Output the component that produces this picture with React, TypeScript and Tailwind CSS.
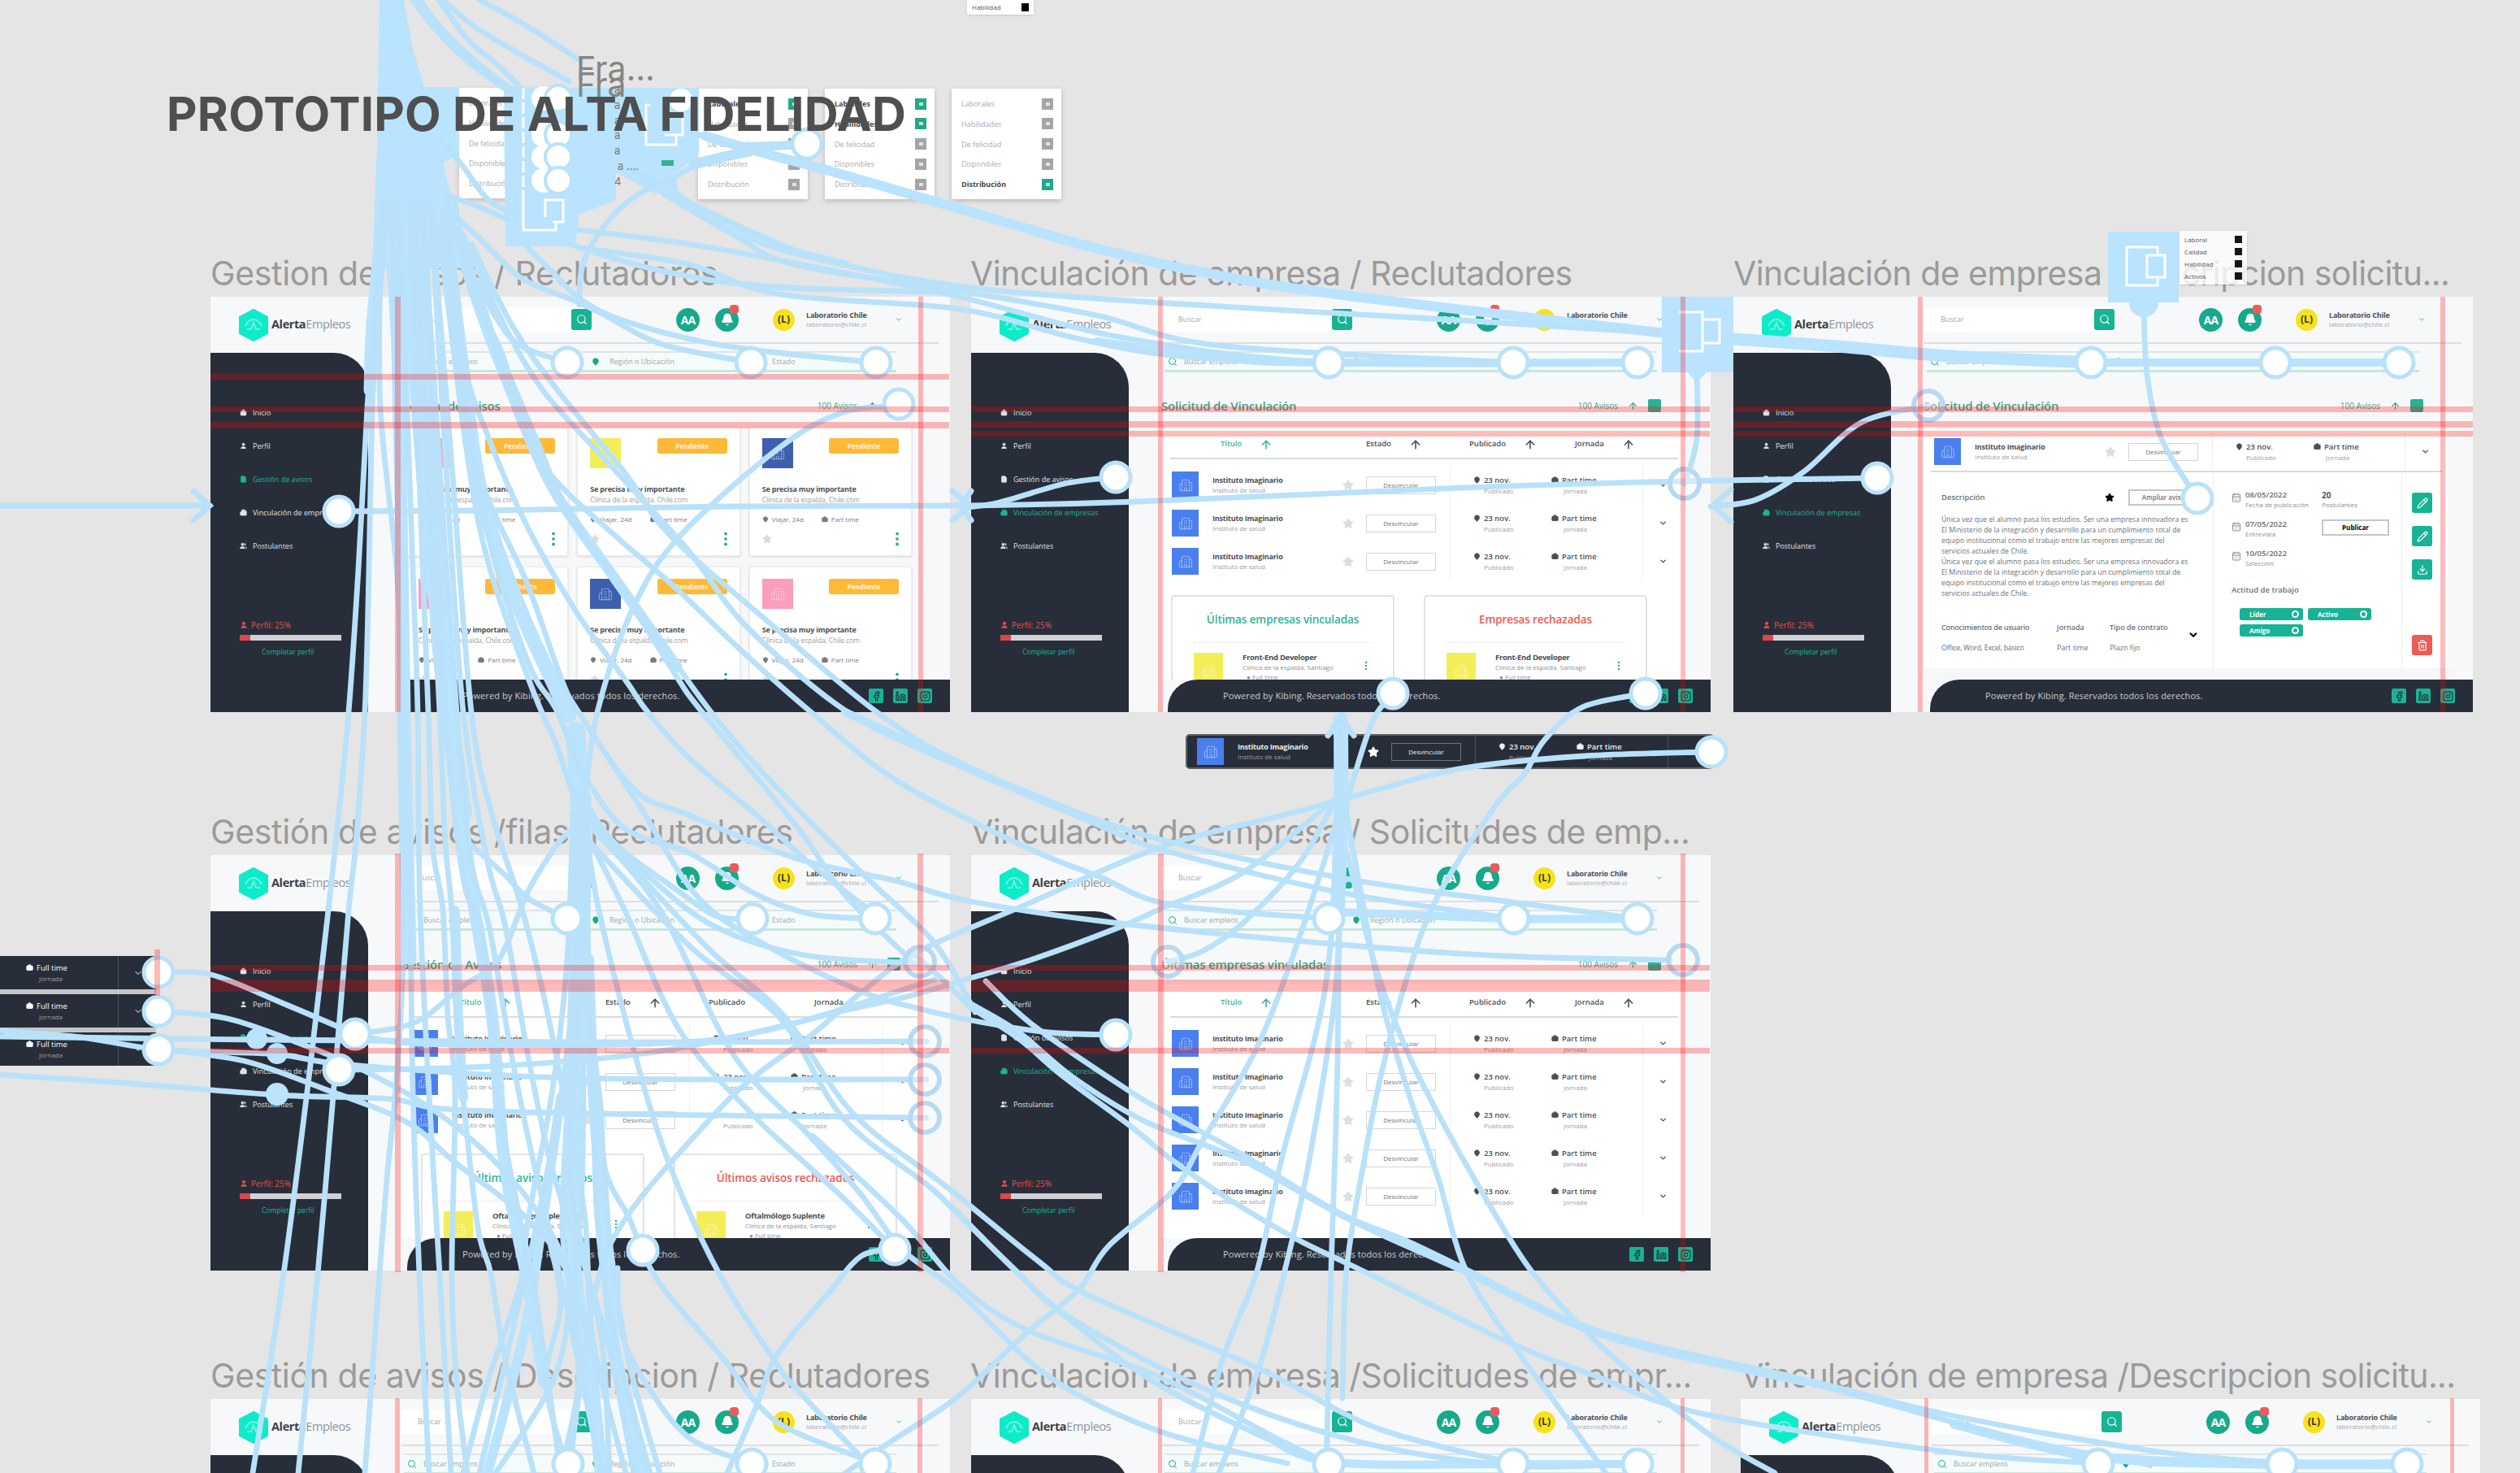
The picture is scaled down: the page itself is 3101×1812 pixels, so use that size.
import React from "react";
import { Search, MapPin, ArrowUp, ChevronDown, Star, Bell, Pencil, Download, Trash2, CalendarDays, MoreVertical, Users, House, User, FileText, Building2, Facebook, Linkedin, Instagram, Briefcase } from "lucide-react";

type Pt = [number, number];

/* ---------- shared pieces of a screen ---------- */

const NAV = [
  { icon: House, label: "Inicio" },
  { icon: User, label: "Perfil" },
  { icon: FileText, label: "Gestión de avisos" },
  { icon: Building2, label: "Vinculación de empresas" },
  { icon: Users, label: "Postulantes" },
];

function Brand() {
  return (
    <div className="flex h-[69px] items-center pl-[34px]">
      <svg className="h-[40px] w-[38px] shrink-0" viewBox="0 0 38 40">
        <path d="M19 1 36 10v20L19 39 2 30V10Z" fill="#0eebcb" stroke="#0eebcb" strokeWidth="2" strokeLinejoin="round" />
        <path d="M9 21c3-7 7-8 10-8s7 2 10 8M11 25h5l3-8 3 8h5" fill="none" stroke="#6df5e0" strokeWidth="2" />
      </svg>
      <div className="ml-[3px] whitespace-nowrap text-[14.5px] leading-none tracking-[-0.4px] text-[#3a4049]">
        <b>Alerta</b>
        <span className="text-[#8b929b]">Empleos</span>
      </div>
    </div>
  );
}

function Sidebar({ active }: { active: number }) {
  return (
    <div className="flex w-[194px] shrink-0 flex-col">
      <Brand />
      <div className="flex flex-1 flex-col rounded-tr-[42px] bg-[#282e39] pl-[36px] pt-[53px]">
        {NAV.map((n, i) => (
          <div key={n.label} className={"flex h-[41px] items-center gap-[7px] whitespace-nowrap text-[9px] " + (i === active ? "text-[#1bb394]" : "text-[#dfe3e8]")}>
            <n.icon className="h-[9px] w-[9px] fill-current" />
            {n.label}
          </div>
        ))}
        <div className="mt-[70px] flex items-center gap-1 text-[10px] leading-[14px] text-[#e05252]">
          <User className="h-[10px] w-[10px] fill-current" />
          Perfil: 25%
        </div>
        <div className="mt-[5px] flex h-[7px] w-[125px] bg-[#cfd1d4]">
          <div className="w-[13px] bg-[#d9484b]" />
        </div>
        <div className="mt-[8px] pl-[27px] text-[8.5px] leading-[11px] text-[#1bb394]">Completar perfil</div>
      </div>
    </div>
  );
}

function TopBar() {
  return (
    <div className="mr-[14px] ml-[41px] flex h-[58px] shrink-0 items-center border-b-2 border-[#dcdfe1]">
      <div className="flex h-[30px] w-[234px] items-center justify-between bg-white pl-[20px] text-[9px] text-[#a9a9a9]">
        Buscar
        <span className="flex h-[26px] w-[25px] items-center justify-center rounded-[3px] bg-[#17b394]">
          <Search className="h-[14px] w-[14px] text-white" />
        </span>
      </div>
      <span className="ml-[104px] flex h-[29px] w-[29px] items-center justify-center rounded-full bg-[#17a98c] text-[14px] font-bold tracking-[-1px] text-white">AA</span>
      <span className="relative ml-[19px] flex h-[29px] w-[29px] items-center justify-center rounded-full bg-[#17a98c]">
        <Bell className="h-[16px] w-[16px] fill-white text-white" />
        <span className="absolute -top-[4px] right-0 h-[11px] w-[11px] rounded-[4px] bg-[#ee5a5a]" />
      </span>
      <span className="ml-[42px] flex h-[27px] w-[27px] items-center justify-center rounded-full bg-[#f8e21c] text-[12px] font-bold text-[#3b3a20]">(L)</span>
      <div className="ml-[14px] w-[96px] whitespace-nowrap leading-[11px]">
        <div className="text-[9px] font-bold tracking-[-0.2px] text-[#4b4f56]">Laboratorio Chile</div>
        <div className="text-[8px] text-[#a3a7ad]">laboratorio@chile.cl</div>
      </div>
      <ChevronDown className="ml-[13px] h-[10px] w-[10px] text-[#17a98c]" />
    </div>
  );
}

function FilterBar() {
  return (
    <div className="mt-[9px] mr-[66px] ml-[44px] flex h-[26px] shrink-0 items-center border-t-2 border-b-[3px] border-t-[#dfe5e6] border-b-[#c8e6dc] bg-[#f4fbfa] text-[9px] text-[#a4a8ac]">
      <span className="flex w-[231px] items-center gap-2 pl-[4px]">
        <Search className="h-[12px] w-[12px] text-[#17a98c]" />
        Buscar empleos
      </span>
      <span className="flex w-[222px] items-center gap-3">
        <MapPin className="h-[12px] w-[10px] fill-[#17a98c] text-[#17a98c]" />
        Región o Ubicación
      </span>
      Estado
    </div>
  );
}

function Heading({ title }: { title: string }) {
  return (
    <div className="mr-[34px] ml-[40px] flex h-[66px] shrink-0 items-center pt-[16px]">
      <div className="flex-1 whitespace-nowrap text-[15px] leading-[20px] font-semibold tracking-[-0.2px] text-[#35a98c]">{title}</div>
      <div className="text-[10px] text-[#45a890]">100 Avisos</div>
      <ArrowUp className="mx-3 h-[13px] w-[13px] text-[#2aa286]" />
      <span className="mr-[27px] h-[16px] w-[16px] rounded-[2px] bg-[#27b294]" />
    </div>
  );
}

function Footer({ round }: { round: boolean }) {
  return (
    <div className={"ml-[48px] flex h-[40px] shrink-0 items-center bg-[#282e39] pr-[22px] pl-[68px] " + (round ? "rounded-tl-[36px]" : "")}>
      <span className="flex-1 whitespace-nowrap text-[11px] tracking-[0.1px] text-[#c9cdd2]">Powered by Kibing. Reservados todos los derechos.</span>
      <span className="flex gap-[12px] text-[#17b394]">
        {[Facebook, Linkedin, Instagram].map((I, i) => (
          <span key={i} className="flex h-[18px] w-[18px] items-center justify-center rounded-[2px] bg-[#17b394]">
            <I className="h-[13px] w-[13px] text-[#282e39]" />
          </span>
        ))}
      </span>
    </div>
  );
}

/* ---------- panel contents ---------- */

function Avatar({ tone, size }: { tone: string; size: string }) {
  return (
    <span className={"flex shrink-0 items-center justify-center " + tone + " " + size}>
      <Building2 className="h-[18px] w-[18px] text-white/40" strokeWidth={1.5} />
    </span>
  );
}

const BLUE = "bg-[#4a7fee]";
const NAVY = "bg-[#3d5fae]";
const PINK = "bg-[#fb9dbd]";
const YELLOW = "bg-[#f3ee58]";

function JobCard({ tone }: { tone: string }) {
  return (
    <div className="flex h-[160px] flex-col border border-[#ececee] bg-white px-[15px] pt-[14px] shadow-[0_1px_3px_#00000022]">
      <div className="flex items-start justify-between">
        <Avatar tone={tone} size="h-[37px] w-[38px]" />
        <span className="flex h-[19px] w-[86px] items-center justify-center rounded-[3px] bg-[#ffb938] text-[8px] font-bold text-[#fff1d4]">Pendiente</span>
      </div>
      <div className="mt-[20px] whitespace-nowrap text-[9px] leading-[12px] font-bold tracking-[-0.2px] text-[#4c5056]">Se precisa muy importante</div>
      <div className="whitespace-nowrap text-[8.5px] leading-[13px] tracking-[-0.1px] text-[#9b9fa4]">Clínica de la espalda, Chile.com</div>
      <div className="mt-[12px] flex gap-[22px] text-[8px] leading-[12px] text-[#777b80]">
        <span className="flex items-center gap-1"><MapPin className="h-[8px] w-[8px] fill-current" />Viajar, 24d</span>
        <span className="flex items-center gap-1"><Briefcase className="h-[8px] w-[8px] fill-current" />Part time</span>
      </div>
      <div className="mt-[7px] flex items-center justify-between">
        <Star className="h-[12px] w-[12px] fill-[#d9dbde] text-[#d9dbde]" />
        <MoreVertical className="-mr-[9px] h-[22px] w-[22px] fill-[#17a98c] text-[#17a98c]" />
      </div>
    </div>
  );
}

function CardGrid() {
  return (
    <div className="mr-[47px] ml-[46px] grid grid-cols-3 gap-x-[11px] gap-y-[13px]">
      {[PINK, YELLOW, NAVY, PINK, NAVY, PINK].map((t, i) => (
        <JobCard key={i} tone={t} />
      ))}
    </div>
  );
}

function CompanyRow({ dark }: { dark?: boolean }) {
  const strong = dark ? "text-[#eceff2]" : "text-[#4a4f56]";
  return (
    <div className={"flex h-[47px] items-center whitespace-nowrap pl-[12px] " + strong}>
      <Avatar tone={BLUE} size="h-[33px] w-[33px]" />
      <div className="ml-[17px] w-[160px] leading-[12px]">
        <div className="text-[9px] font-bold tracking-[-0.2px]">Instituto Imaginario</div>
        <div className="text-[8px] text-[#9a9ea4]">Instituto de salud</div>
      </div>
      <Star className={"h-[14px] w-[14px] " + (dark ? "fill-white text-white" : "fill-[#dcdee0] text-[#dcdee0]")} />
      <span className={"ml-[15px] flex h-[22px] w-[86px] items-center justify-center border text-[8px] " + (dark ? "border-[#6b727c]" : "border-[#d3d5d8] bg-white text-[#70757b]")}>Desvincular</span>
      <div className={"ml-[17px] flex h-full w-[125px] items-center border-l pl-[28px] " + (dark ? "border-[#4a515c]" : "border-[#eef0f1]")}>
        <div className="leading-[13px]">
          <div className="flex items-center gap-1 text-[9.5px] font-semibold"><MapPin className="h-[9px] w-[9px] fill-current" />23 nov.</div>
          <div className="pl-[13px] text-[8px] text-[#9a9ea4]">Publicado</div>
        </div>
      </div>
      <div className="flex h-full w-[112px] items-center leading-[13px]">
        <div>
          <div className="flex items-center gap-1 text-[9.5px] font-semibold"><Briefcase className="h-[9px] w-[9px] fill-current" />Part time</div>
          <div className="pl-[15px] text-[8px] text-[#9a9ea4]">Jornada</div>
        </div>
      </div>
      <span className={"flex h-full items-center border-l pl-[19px] " + (dark ? "border-[#4a515c]" : "border-[#eef0f1]")}>
        <ChevronDown className="h-[11px] w-[11px]" strokeWidth={3} />
      </span>
    </div>
  );
}

function TableHead() {
  const cols: [string, string][] = [
    ["Título", "w-[179px] text-[#35b79a]"],
    ["Estado", "w-[127px]"],
    ["Publicado", "w-[130px]"],
    ["Jornada", "w-[90px]"],
  ];
  return (
    <div className="mr-[10px] ml-[10px] flex h-[41px] items-center border-b-2 border-[#d7dbdc] pt-[6px] pl-[62px] text-[9.5px] font-semibold text-[#4a4f56]">
      {cols.map(([c, cls]) => (
        <span key={c} className={"flex items-center gap-[22px] " + cls}>
          {c}
          <ArrowUp className="h-[18px] w-[16px]" strokeWidth={2.4} />
        </span>
      ))}
    </div>
  );
}

function SummaryCard({ title, tone, job }: { title: string; tone: string; job: string }) {
  return (
    <div className="flex w-[275px] flex-col rounded-[4px] border-2 border-[#e1e4e6] bg-white px-[26px] pt-[18px]">
      <div className={"text-center text-[13.5px] leading-[20px] font-semibold tracking-[-0.1px] whitespace-nowrap " + tone}>{title}</div>
      <div className="mt-[18px] border-t border-dashed border-[#e3e5e7]" />
      <div className="mt-[12px] flex">
        <Avatar tone={YELLOW} size="h-[46px] w-[36px]" />
        <div className="ml-[24px] flex-1 whitespace-nowrap leading-[12px]">
          <div className="text-[9.5px] font-bold tracking-[-0.3px] text-[#4a4f56]">{job}</div>
          <div className="text-[8px] text-[#8d9197]">Clínica de la espalda, Santiago</div>
          <div className="pl-[5px] text-[8px] text-[#8d9197]">● Full time</div>
        </div>
        <MoreVertical className="mt-[6px] h-[20px] w-[14px] text-[#17a98c]" />
      </div>
    </div>
  );
}

function TablePanel({ rows, cards, inset = "pl-[11px]" }: { rows: number; cards?: [string, string, string]; inset?: string }) {
  return (
    <div className="mr-[30px] ml-[41px] flex flex-1 flex-col bg-white">
      <TableHead />
      <div className="pt-[8px]">
        {Array.from({ length: rows }, (_, i) => (
          <CompanyRow key={i} />
        ))}
      </div>
      {cards && (
        <div className={"mt-[18px] flex h-[200px] gap-[36px] " + inset}>
          <SummaryCard title={cards[0]} tone="text-[#2fb598]" job={cards[2]} />
          <SummaryCard title={cards[1]} tone="text-[#f05a52]" job={cards[2]} />
        </div>
      )}
    </div>
  );
}

const PARAGRAPH = [
  "Única vez que el alumno pasa los estudios. Ser una empresa innovadora es",
  "El Ministerio de la integración y desarrollo para un cumplimiento total de",
  "equipo institucional como el trabajo entre las mejores empresas del",
  "servicios actuales de Chile.",
];

function DateItem({ date, note }: { date: string; note: string }) {
  return (
    <div className="flex h-[36px] gap-[5px] whitespace-nowrap">
      <CalendarDays className="mt-[3px] h-[12px] w-[12px] text-[#888d93]" />
      <div className="leading-[12px]">
        <div className="text-[9.5px] font-semibold text-[#666b71]">{date}</div>
        <div className="text-[8px] text-[#8d9197]">{note}</div>
      </div>
    </div>
  );
}

function Tag({ label }: { label: string }) {
  return (
    <span className="flex h-[15px] w-[78px] items-center justify-between rounded-[3px] bg-[#17b394] pr-[5px] pl-[12px] text-[8px] font-bold text-white">
      {label}
      <i className="h-[9px] w-[9px] rounded-full border-2 border-white" />
    </span>
  );
}

function DetailPanel() {
  return (
    <div className="mr-[30px] ml-[41px] flex flex-1 flex-col bg-white">
      <div className="mx-[8px] border-b-2 border-[#d7dbdc] pt-[8px]">
        <div className="-ml-[8px]"><CompanyRow /></div>
      </div>
      <div className="flex flex-1 pl-[21px]">
        <div className="w-[334px] pt-[20px] text-[#6d7177]">
          <div className="flex h-[22px] items-center text-[9.5px] font-semibold">
            <span className="flex-1">Descripción</span>
            <Star className="mr-[17px] h-[12px] w-[12px] fill-black text-black" />
            <span className="mr-[18px] flex h-[20px] w-[86px] items-center justify-center border-2 border-[#c3c6c9] text-[8px]">Ampliar aviso</span>
          </div>
          <div className="mt-[10px] w-[320px] text-[8.7px] leading-[13px] whitespace-nowrap">
            {[0, 1].map((k) => (
              <p key={k}>
                {PARAGRAPH.map((l) => (
                  <span key={l} className="block">{l}</span>
                ))}
              </p>
            ))}
          </div>
          <div className="mt-[27px] grid grid-cols-[142px_65px_90px_auto] items-center gap-y-[12px] whitespace-nowrap text-[9px] leading-[13px]">
            <span className="font-semibold tracking-[-0.2px]">Conocimientos de usuario</span>
            <span className="font-semibold">Jornada</span>
            <span className="font-semibold">Tipo de contrato</span>
            <ChevronDown className="ml-[6px] h-[14px] w-[14px] translate-y-[10px] text-black" strokeWidth={3.5} />
            <span className="tracking-[-0.3px]">Office, Word, Excel, básico</span>
            <span>Part time</span>
            <span>Plazo fijo</span>
          </div>
        </div>
        <div className="w-[232px] border-l border-[#eceef0] pt-[22px] pl-[22px]">
          <div className="grid grid-cols-[111px_auto]">
            <DateItem date="08/05/2022" note="Fecha de publicación" />
            <div className="text-[8px] leading-[12px] text-[#8d9197]"><b className="block text-[10px] text-[#555a60]">20</b>Postulantes</div>
            <DateItem date="07/05/2022" note="Entrevista" />
            <span className="flex h-[20px] w-[83px] items-center justify-center border-2 border-[#c3c6c9] text-[8px] font-bold">Publicar</span>
            <DateItem date="10/05/2022" note="Selección" />
          </div>
          <div className="mt-[8px] text-[9.5px] font-semibold text-[#6d7177]">Actitud de trabajo</div>
          <div className="mt-[15px] flex flex-wrap gap-x-[6px] gap-y-[5px] pl-[10px]">
            <Tag label="Líder" />
            <Tag label="Activo" />
            <Tag label="Amigo" />
          </div>
        </div>
        <div className="flex flex-1 flex-col items-center gap-[16px] border-l border-[#eceef0] pt-[25px] pr-[8px]">
          {[Pencil, Pencil, Download].map((I, i) => (
            <span key={i} className="flex h-[25px] w-[25px] items-center justify-center rounded-[3px] bg-[#17b394]">
              <I className="h-[14px] w-[14px] text-white" />
            </span>
          ))}
          <span className="mt-[52px] flex h-[25px] w-[25px] items-center justify-center rounded-[3px] bg-[#ee5a55]">
            <Trash2 className="h-[14px] w-[14px] text-white" />
          </span>
        </div>
      </div>
      <div className="-mx-2 h-[14px] bg-[#f6f7f9]" />
    </div>
  );
}

type FrameProps = { at: string; active: number; title: string; round?: boolean; children: React.ReactNode };

function Frame({ at, active, title, round = true, children }: FrameProps) {
  return (
    <section className={"absolute flex h-[511px] w-[910px] overflow-hidden bg-[#f7f8fa] " + at}>
      <Sidebar active={active} />
      <div className="flex min-w-0 flex-1 flex-col">
        <TopBar />
        <FilterBar />
        <Heading title={title} />
        <div className="flex min-h-0 flex-1 flex-col overflow-hidden">{children}</div>
        <Footer round={round} />
      </div>
    </section>
  );
}

function Label({ at, children }: { at: string; children: React.ReactNode }) {
  return <div className={"absolute whitespace-nowrap text-[41px] leading-[50px] text-[#9b9b9b] " + at}>{children}</div>;
}

function OptionMenu({ at, on }: { at: string; on: number[] }) {
  return (
    <div className={"absolute flex h-[136px] w-[135px] flex-col justify-between bg-white py-[11px] pr-[10px] pl-[12px] shadow-[0_2px_6px_#00000033] " + at}>
      {["Laborales", "Habilidades", "De felicidad", "Disponibles", "Distribución"].map((t, i) => (
        <div key={t} className={"flex items-center justify-between text-[9px] leading-[15px] " + (on.includes(i) ? "font-bold text-[#45484c]" : "text-[#a9abae]")}>
          {t}
          <span className={"flex h-[14px] w-[14px] items-center justify-center " + (on.includes(i) ? "bg-[#22a888]" : "bg-[#a3a5a6]")}>
            <i className="h-[4px] w-[5px] bg-white/70" />
          </span>
        </div>
      ))}
    </div>
  );
}

/* ---------- prototype connectors ---------- */

function smooth(p: Pt[]): string {
  let d = `M${p[0][0]} ${p[0][1]}`;
  for (let i = 0; i < p.length - 1; i++) {
    const a = p[Math.max(0, i - 1)], b = p[i], c = p[i + 1], e = p[Math.min(p.length - 1, i + 2)];
    d += `C${b[0] + (c[0] - a[0]) / 6} ${b[1] + (c[1] - a[1]) / 6} ${c[0] - (e[0] - b[0]) / 6} ${c[1] - (e[1] - b[1]) / 6} ${c[0]} ${c[1]}`;
  }
  return d;
}

const THIN: Pt[][] = [
  // fan above the menus
  [[508, 0], [535, 35], [575, 75], [625, 112]],
  [[517, 0], [543, 35], [585, 75], [632, 112]],
  [[540, 0], [577, 50], [610, 78], [643, 110]],
  [[545, 0], [580, 30], [625, 58], [700, 100]],
  [[590, 0], [650, 33], [715, 75]],
  // trunk going down the left
  [[470, 250], [458, 440], [452, 500], [441, 700], [429, 876], [413, 1037], [404, 1120], [382, 1310], [349, 1567], [311, 1812]],
  [[476, 250], [462, 440], [458, 500], [454, 700], [449, 876], [438, 1037], [429, 1120], [409, 1360], [391, 1567], [367, 1812]],
  [[483, 250], [486, 480], [491, 700], [492, 876], [494, 1000], [496, 1180], [487, 1340], [477, 1440], [467, 1567], [449, 1812]],
  [[468, 300], [468, 500], [488, 700], [497, 876], [503, 1037], [505, 1120], [508, 1340], [516, 1567], [528, 1812]],
  [[490, 250], [500, 480], [508, 700], [514, 876], [517, 1120], [531, 1400], [541, 1567], [555, 1812]],
  [[505, 250], [515, 560], [527, 876], [532, 1037], [545, 1120], [551, 1250], [560, 1343], [556, 1567], [562, 1700], [575, 1812]],
  [[510, 250], [525, 560], [541, 876], [548, 1037], [556, 1120], [562, 1250], [570, 1350], [588, 1510], [604, 1567], [621, 1669], [657, 1812]],
  [[520, 250], [534, 560], [548, 876], [570, 1080], [592, 1140], [604, 1260], [617, 1380], [640, 1500], [660, 1600], [690, 1812]],
  [[520, 250], [540, 560], [562, 876], [580, 1060], [602, 1140], [628, 1290], [650, 1400], [680, 1530], [700, 1620], [740, 1812]],
  [[530, 250], [548, 560], [570, 876], [600, 1060], [622, 1140], [650, 1300], [680, 1440], [720, 1560], [750, 1660], [780, 1812]],
  [[530, 250], [555, 560], [580, 876], [605, 1000], [640, 1110], [668, 1220], [700, 1380], [720, 1500], [730, 1650], [770, 1812]],
  [[540, 280], [575, 560], [603, 700], [656, 850], [686, 920], [715, 1010]],
  [[545, 260], [565, 440], [601, 659], [650, 815], [686, 876], [718, 960]],
  [[550, 280], [579, 547], [650, 721], [690, 833], [712, 876], [780, 971], [846, 1002], [980, 1056], [1100, 1083], [1195, 1109], [1379, 1136], [1650, 1162], [1850, 1176], [2055, 1181]],
  [[550, 250], [570, 440], [601, 538], [650, 650], [712, 757], [770, 837], [797, 876], [846, 931], [936, 1007], [994, 1060], [1070, 1120]],
  [[560, 280], [600, 400], [640, 520], [686, 614], [757, 712], [833, 833], [864, 876], [980, 1016], [1039, 1100], [1120, 1180]],
  [[570, 300], [610, 420], [660, 540], [700, 630], [784, 748], [875, 876], [958, 971], [1070, 1083], [1150, 1160], [1200, 1245]],
  // long sweeps towards the second column
  [[560, 250], [577, 350], [617, 433], [640, 510], [677, 583], [757, 659], [829, 721], [913, 801], [998, 876], [1106, 962], [1262, 1042], [1352, 1078], [1441, 1113], [1635, 1130]],
  [[570, 290], [617, 393], [668, 480], [748, 569], [846, 676], [918, 770], [1043, 876], [1173, 939], [1352, 1015], [1432, 1046], [1650, 1098], [1863, 1130]],
  [[580, 300], [630, 400], [686, 480], [770, 583], [824, 658], [936, 757], [1079, 876], [1185, 940], [1360, 1012], [1500, 1050], [1680, 1085], [1863, 1110], [2015, 1130]],
  // first frame filters
  [[565, 270], [597, 300], [643, 343], [707, 370], [743, 387], [813, 423], [924, 446]],
  [[640, 295], [680, 335], [713, 367], [763, 393], [863, 420], [950, 433], [1078, 446]],
  [[590, 350], [610, 390], [640, 425], [698, 446]],
  [[540, 170], [570, 205], [600, 245], [635, 265]],
  [[550, 240], [590, 255], [625, 270]],
  [[807, 227], [770, 250], [737, 287], [716, 330], [713, 375]],
  // top band to the overlay box
  [[816, 233], [920, 283], [1016, 320], [1180, 352], [1420, 372], [1780, 393], [2050, 410]],
  [[816, 238], [905, 290], [979, 326], [1180, 358], [1350, 388], [1500, 425], [1862, 446]],
  [[713, 283], [846, 300], [1000, 328], [1180, 365], [1380, 415], [1635, 446], [2015, 446]],
  [[713, 305], [846, 325], [960, 362], [1180, 380], [1320, 415], [1450, 438], [1635, 446]],
  [[700, 300], [800, 330], [940, 352], [1180, 360]],
  [[850, 200], [915, 185], [985, 180]],
  [[858, 165], [900, 178], [985, 176]],
  [[780, 210], [816, 225], [855, 205], [940, 185]],
  // card grid
  [[1106, 500], [1038, 507], [960, 550], [837, 659], [779, 748], [735, 876], [715, 1000], [686, 1038], [650, 1096], [614, 1180], [568, 1214], [510, 1258], [437, 1272]],
  // horizontals
  [[0, 622], [258, 622]],
  [[417, 629], [600, 628], [900, 623], [1190, 622], [1400, 617], [1800, 600], [2073, 592], [2310, 588]],
  [[1373, 587], [1310, 595], [1230, 618], [1190, 624]],
  [[2105, 623], [2160, 615], [2220, 580], [2290, 520], [2373, 499]],
  [[0, 1275], [316, 1279], [700, 1282], [1140, 1281]],
  [[0, 1268], [100, 1276], [197, 1291], [341, 1297], [430, 1310], [700, 1326], [1140, 1328]],
  [[0, 1322], [150, 1332], [341, 1347], [480, 1352], [600, 1367], [1140, 1375]],
  [[197, 1196], [260, 1199], [350, 1235], [437, 1272]],
  [[197, 1244], [280, 1253], [370, 1284], [450, 1318], [540, 1370], [620, 1440], [680, 1520], [710, 1600]],
  [[197, 1291], [300, 1305], [400, 1340], [500, 1380], [560, 1430], [650, 1500], [700, 1570], [740, 1700]],
  [[417, 1316], [600, 1312], [800, 1295], [950, 1265], [1039, 1243], [1120, 1225], [1195, 1203], [1271, 1180], [1379, 1140], [1428, 1118], [1530, 1073], [1640, 985]],
  [[437, 1272], [520, 1284], [800, 1284], [950, 1266], [1150, 1205]],
  // second column, second row
  [[2106, 925], [1950, 930], [1800, 945], [1700, 970], [1590, 1000], [1428, 1042], [1262, 1113], [1129, 1171], [1061, 1220], [1000, 1272], [934, 1320], [880, 1370], [769, 1500], [730, 1600], [700, 1812]],
  [[2025, 853], [1947, 870], [1900, 911], [1876, 952], [1841, 990], [1768, 1105], [1731, 1204], [1700, 1320], [1680, 1420], [1657, 1563], [1652, 1720]],
  [[1714, 853], [1690, 885], [1668, 950], [1655, 1000]],
  [[1437, 1183], [1480, 1170], [1530, 1135], [1600, 1060], [1645, 980]],
  [[1650, 990], [1630, 1220], [1578, 1422], [1547, 1563], [1505, 1670], [1468, 1812]],
  [[1648, 990], [1645, 1200], [1612, 1422], [1581, 1563], [1550, 1680], [1500, 1812]],
  [[1650, 900], [1646, 1300], [1638, 1563], [1632, 1812]],
  [[1655, 990], [1675, 1100], [1700, 1230], [1735, 1350], [1770, 1450], [1804, 1563], [1866, 1660], [1915, 1727], [1976, 1812]],
  [[1658, 1050], [1690, 1180], [1730, 1290], [1775, 1380], [1820, 1460], [1884, 1563], [1964, 1650], [2037, 1713], [2111, 1770], [2184, 1812]],
  [[1648, 1000], [1600, 1150], [1547, 1288], [1480, 1403], [1443, 1465], [1364, 1533], [1327, 1587], [1266, 1637], [1180, 1717], [1097, 1773], [1040, 1812]],
  [[1213, 1207], [1271, 1261], [1388, 1341], [1441, 1372], [1530, 1421], [1650, 1493], [1730, 1526], [1817, 1568], [1964, 1640], [2221, 1700], [2405, 1750], [2582, 1800]],
  [[1195, 1235], [1254, 1270], [1320, 1325], [1410, 1380], [1530, 1428], [1660, 1500], [1792, 1560], [1930, 1625], [2037, 1656], [2221, 1697], [2405, 1742], [2650, 1785], [2808, 1800]],
  [[1195, 1240], [1254, 1278], [1307, 1323], [1392, 1386], [1441, 1426], [1512, 1475], [1597, 1525], [1670, 1560], [1854, 1650], [1964, 1693], [2099, 1740], [2405, 1787], [2582, 1800]],
  [[1120, 1170], [1160, 1205], [1195, 1240]],
  [[730, 904], [788, 993], [860, 1105], [950, 1167], [1061, 1220], [1120, 1238], [1200, 1256], [1290, 1270], [1373, 1273]],
  [[716, 980], [757, 1038], [829, 1092], [882, 1127], [926, 1130]],
  [[722, 960], [770, 1020], [850, 1050], [930, 1100], [1000, 1125], [1077, 1130]],
  [[728, 1010], [800, 1080], [880, 1140], [990, 1175], [1130, 1185]],
  [[730, 1040], [850, 1165], [961, 1254], [1039, 1377], [1151, 1466], [1236, 1550], [1300, 1610], [1420, 1700], [1560, 1770], [1635, 1800]],
  [[735, 1020], [870, 1165], [965, 1250], [1050, 1370], [1165, 1460], [1276, 1550], [1339, 1593], [1548, 1683], [1695, 1757], [1862, 1800]],
  [[722, 1030], [737, 1120], [778, 1285], [822, 1428], [885, 1567], [956, 1678], [975, 1703], [1060, 1793]],
  [[724, 1030], [769, 1120], [836, 1267], [925, 1370], [992, 1432], [1039, 1475], [1101, 1537]],
  [[730, 1020], [813, 1120], [903, 1298], [996, 1397], [1060, 1470], [1110, 1537], [1180, 1590], [1290, 1693], [1425, 1760], [1584, 1800]],
  [[1000, 1397], [1110, 1500], [1180, 1580], [1266, 1637], [1425, 1693], [1572, 1770], [1635, 1800]],
  [[1151, 1466], [1247, 1560], [1315, 1620], [1486, 1710], [1670, 1773], [1862, 1803], [2015, 1800]],
  // central cascade
  [[710, 980], [708, 1180], [690, 1350], [657, 1522], [630, 1640], [590, 1812]],
  [[705, 1000], [698, 1180], [680, 1340], [650, 1500], [640, 1580], [600, 1700], [570, 1812]],
  [[718, 980], [716, 1180], [706, 1340], [692, 1500], [700, 1600], [680, 1700], [610, 1812]],
  [[724, 980], [722, 1180], [730, 1340], [735, 1500], [755, 1640], [800, 1812]],
  [[722, 1000], [726, 1250], [742, 1420], [752, 1540], [775, 1680], [812, 1812]],
  [[715, 1180], [738, 1350], [745, 1440], [775, 1500], [791, 1544]],
  [[712, 1180], [700, 1420], [722, 1560], [742, 1660], [750, 1812]],
  [[700, 1300], [672, 1480], [690, 1600], [672, 1700], [700, 1812]],
  [[718, 1300], [716, 1460], [706, 1600], [712, 1700], [690, 1812]],
  [[791, 1544], [820, 1590], [889, 1670], [932, 1727], [975, 1760], [1077, 1800]],
  [[760, 1560], [765, 1640], [800, 1710], [850, 1770], [925, 1800]],
  [[1101, 1537], [1060, 1545], [1020, 1590], [956, 1667], [932, 1727], [895, 1812]],
  [[577, 1037], [620, 1075], [650, 1105], [698, 1130]],
  // description dialog
  [[2638, 375], [2642, 460], [2660, 540], [2704, 613]],
  [[2088, 455], [2088, 540], [2073, 595]],
];

const THICK: { w: number; p: Pt[] }[] = [
  { w: 22, p: [[516, 250], [522, 480], [532, 640], [545, 820], [570, 1000]] },
  { w: 15, p: [[535, 740], [548, 876], [572, 1037], [584, 1120], [606, 1254], [621, 1432], [650, 1580], [670, 1700]] },
  { w: 26, p: [[500, 280], [517, 480], [530, 650], [534, 720]] },
  { w: 15, p: [[470, 280], [458, 400], [455, 480]] },
  { w: 15, p: [[480, 280], [491, 480], [498, 876], [505, 1180]] },
  { w: 18, p: [[545, 260], [572, 480], [595, 620], [640, 750], [700, 880]] },
  { w: 13, p: [[555, 270], [590, 380], [628, 480], [680, 600], [757, 712], [833, 820]] },
  { w: 24, p: [[708, 900], [716, 1040], [712, 1180], [708, 1330], [700, 1480]] },
  { w: 14, p: [[724, 1180], [730, 1340], [742, 1500], [755, 1650], [790, 1812]] },
  { w: 12, p: [[690, 1350], [665, 1520], [645, 1640], [600, 1812]] },
  { w: 16, p: [[700, 1480], [712, 1600], [728, 1700], [740, 1812]] },
  { w: 12, p: [[560, 1120], [564, 1250], [570, 1350]] },
  { w: 18, p: [[1650, 885], [1650, 1000], [1646, 1120]] },
  { w: 10, p: [[1040, 876], [1190, 945], [1360, 1015]] },
  { w: 10, p: [[1800, 1562], [1930, 1625], [2037, 1660], [2221, 1700]] },
  { w: 12, p: [[868, 167], [935, 187], [1031, 213], [1216, 267], [1340, 303], [1480, 335], [1660, 364], [2050, 410]] },
  { w: 10, p: [[826, 235], [880, 270], [950, 302], [1040, 325]] },
  { w: 15, p: [[2133, 417], [2260, 426], [2400, 438], [2573, 446]] },
  { w: 10, p: [[1350, 420], [1500, 440], [1635, 446], [2015, 446]] },
  { w: 10, p: [[2573, 446], [2952, 446]] },
  { w: 10, p: [[1650, 1122], [1863, 1130], [2015, 1130]] },
  { w: 10, p: [[1550, 1760], [1635, 1798], [1862, 1801], [2015, 1801]] },
  { w: 12, p: [[2405, 1752], [2582, 1792], [2808, 1801], [2962, 1801]] },
];

const HOTSPOTS: Pt[] = [
  [698, 446], [924, 446], [1078, 446], [417, 629],
  [1635, 446], [1862, 446], [2015, 446], [1373, 587], [1714, 853], [2025, 853],
  [2573, 446], [2800, 446], [2952, 446], [2310, 588], [2704, 613],
  [698, 1130], [926, 1130], [1077, 1130], [1635, 1130], [1863, 1130], [2015, 1130], [1373, 1273],
  [437, 1272], [417, 1316], [195, 1196], [195, 1244], [195, 1291], [791, 1538], [1101, 1537], [2106, 925],
  [699, 1801], [925, 1801], [1077, 1801], [1635, 1801], [1862, 1801], [2015, 1801], [2582, 1801], [2808, 1801], [2962, 1801],
  [1106, 497], [993, 177],
];
const RINGS: Pt[] = [[1138, 1281], [1138, 1328], [1138, 1375], [1132, 1183], [1437, 1183], [2071, 1181], [2373, 499], [2073, 595]];

function Connectors() {
  return (
    <svg className="absolute inset-0 h-[1812px] w-[3101px]" viewBox="0 0 3101 1812" fill="none" stroke="#b9e1fa" strokeLinecap="round">
      <path stroke="none" fill="#b9e3ff" d="M467 0H497L508 60 522 107H565V190L545 200 555 240 572 290 580 330H458L464 180Z" />
      <path stroke="none" fill="#b9e3ff" d="M620 108H860V190L832 212 834 238 806 238 758 212V246L712 264 708 303H622Z" />
      {THICK.map((l, i) => <path key={i} stroke="#b9e3ff" strokeWidth={l.w} d={smooth(l.p)} />)}
      {THIN.map((p, i) => <path key={i} strokeWidth={6.8} d={smooth(p)} />)}
      <path strokeWidth={7} d="M238 604 258 622 238 640M1172 604 1194 622 1172 640M2130 602 2108 622 2130 642M1634 905 1650 882 1666 905M1195 604 1182 622 1195 640" />
      <g stroke="none" fill="#b9e3ff">
        <path d="M2045 365H2133V458H2100L2088 470 2076 458H2045Z" />
        <path d="M2594 285H2681V372H2656A18 18 0 0 1 2620 372H2594Z" />
        <circle cx="316" cy="1278" r="13" />
        <circle cx="341" cy="1296" r="13" />
        <circle cx="341" cy="1346" r="14" />
      </g>
      <g stroke="#fff" strokeWidth={3} strokeLinecap="butt">
        <path d="M2655 312V304H2617V351H2655V343M2642 314H2664V341H2642Z" />
        <path d="M2066 384H2095V392M2066 432H2095V424M2095 393H2116V422H2095Z" />
        <path strokeDasharray="14 4" d="M644 108V230" />
        <path d="M644 234V283H684V274M671 267V246H693V273H680" />
        <path d="M800 129H795V178H832V166M818 166H840V145" />
      </g>
      <g fill="#fff" stroke="none">
        {[121, 166, 193, 222].map((y) => (
          <React.Fragment key={y}>
            <circle cx="669" cy={y} r="15" />
            <circle cx="687" cy={y} r="16" stroke="#b9e2fb" strokeWidth={4} />
          </React.Fragment>
        ))}
        <circle cx="838" cy="123" r="14" />
      </g>
      <g fill="#fff" strokeWidth={5}>
        {HOTSPOTS.map(([x, y], i) => <circle key={i} cx={x} cy={y} r="18" />)}
      </g>
      <g fill="#ffffff" fillOpacity=".35" stroke="#b7d9f2" strokeWidth={6}>
        {RINGS.map(([x, y], i) => <circle key={i} cx={x} cy={y} r="18" />)}
      </g>
    </svg>
  );
}

/* ---------- translucent layout guides ---------- */

const GUIDES = [
  // vertical
  "left-[486px] top-[365px] w-[7px] h-[511px]", "left-[1130px] top-[365px] w-[6px] h-[511px]",
  "left-[1425px] top-[365px] w-[6px] h-[511px]", "left-[2068px] top-[365px] w-[6px] h-[511px]",
  "left-[2360px] top-[365px] w-[6px] h-[511px]", "left-[3003px] top-[365px] w-[6px] h-[511px]",
  "left-[486px] top-[1050px] w-[7px] h-[515px]", "left-[1129px] top-[1050px] w-[7px] h-[515px]",
  "left-[1425px] top-[1050px] w-[7px] h-[515px]", "left-[2068px] top-[1050px] w-[6px] h-[515px]",
  "left-[486px] top-[1720px] w-[6px] h-[92px]", "left-[1129px] top-[1720px] w-[6px] h-[92px]",
  "left-[1425px] top-[1720px] w-[5px] h-[92px]", "left-[2068px] top-[1720px] w-[5px] h-[92px]",
  "left-[2368px] top-[1720px] w-[5px] h-[92px]", "left-[3015px] top-[1720px] w-[5px] h-[92px]",
  "left-[190px] top-[1168px] w-[7px] h-[57px]",
  // horizontal
  "left-[259px] top-[460px] w-[909px] h-[7px]", "left-[259px] top-[500px] w-[909px] h-[7px]", "left-[259px] top-[519px] w-[909px] h-[8px]",
  "left-[1195px] top-[500px] w-[909px] h-[7px]", "left-[1195px] top-[518px] w-[909px] h-[8px]", "left-[1195px] top-[530px] w-[909px] h-[7px]",
  "left-[2133px] top-[500px] w-[910px] h-[7px]", "left-[2133px] top-[518px] w-[910px] h-[8px]", "left-[2133px] top-[530px] w-[910px] h-[7px]",
  "left-[259px] top-[1187px] w-[909px] h-[7px]", "left-[259px] top-[1205px] w-[909px] h-[15px]", "left-[259px] top-[1289px] w-[909px] h-[7px]",
  "left-[1195px] top-[1187px] w-[909px] h-[7px]", "left-[1195px] top-[1205px] w-[909px] h-[15px]", "left-[1195px] top-[1289px] w-[909px] h-[7px]",
];

export default function App() {
  return (
    <main className="relative h-[1812px] w-[3101px] overflow-hidden bg-[#e5e5e5] [font-family:'Open_Sans','Noto_Sans',sans-serif]">
      <div className="[font-family:Inter,sans-serif]">
        <Label at="left-[259px] top-[311px] tracking-[-0.35px]">Gestion de avisos / Reclutadores</Label>
        <Label at="left-[1194px] top-[311px] tracking-[-0.45px]">Vinculación de empresa / Reclutadores</Label>
        <Label at="left-[259px] top-[998px] tracking-[-0.35px]">Gestión de avisos /filas/ Reclutadores</Label>
        <Label at="left-[1194px] top-[998px] tracking-[-0.5px]">Vinculación de empresa / Solicitudes de emp...</Label>
        <Label at="left-[259px] top-[1667px] tracking-[-0.42px]">Gestión de avisos / Descripcion / Reclutadores</Label>
        <Label at="left-[1194px] top-[1667px] tracking-[-0.47px]">Vinculación de empresa /Solicitudes de empr...</Label>
        <Label at="left-[2142px] top-[1667px] tracking-[-0.6px]">Vinculación de empresa /Descripcion solicitu...</Label>
      </div>

      <OptionMenu at="left-[565px] top-[108px]" on={[]} />
      <OptionMenu at="left-[859px] top-[109px]" on={[0]} />
      <OptionMenu at="left-[1015px] top-[109px]" on={[0, 1]} />
      <OptionMenu at="left-[1171px] top-[109px]" on={[4]} />
      <div className="absolute left-[1190px] top-0 flex h-[18px] w-[82px] items-center justify-between bg-white px-[6px] text-[8px] text-[#555] shadow">
        Habilidad
        <i className="h-[10px] w-[9px] bg-black" />
      </div>

      <Frame at="left-[259px] top-[365px]" active={2} title="Gestión de avisos" round={false}><CardGrid /></Frame>
      <Frame at="left-[1195px] top-[365px]" active={3} title="Solicitud de Vinculación">
        <TablePanel rows={3} cards={["Últimas empresas vinculadas", "Empresas rechazadas", "Front-End Developer"]} />
      </Frame>
      <Frame at="left-[2133px] top-[365px]" active={3} title="Solicitud de Vinculación"><DetailPanel /></Frame>
      <Frame at="left-[259px] top-[1052px]" active={2} title="Gestión de Avisos">
        <TablePanel rows={3} inset="pl-[24px]" cards={["Últimos avisos creados", "Últimos avisos rechazados", "Oftalmólogo Suplente"]} />
      </Frame>
      <Frame at="left-[1195px] top-[1052px]" active={3} title="Últimas empresas vinculadas"><TablePanel rows={5} /></Frame>
      <Frame at="left-[259px] top-[1721px]" active={2} title="Gestión de avisos"><TablePanel rows={3} /></Frame>
      <Frame at="left-[1195px] top-[1721px]" active={3} title="Solicitudes"><TablePanel rows={3} /></Frame>
      <Frame at="left-[2142px] top-[1721px]" active={3} title="Solicitudes"><TablePanel rows={3} /></Frame>

      <div className="absolute left-[1459px] top-[903px] h-[43px] w-[650px] overflow-hidden rounded-[5px] border-2 border-[#5b6069] bg-[#282e39]">
        <div className="-mt-[4px]"><CompanyRow dark /></div>
      </div>
      <div className="absolute left-0 top-[1176px] flex w-[192px] flex-col gap-[6px] bg-[#c5c7c9]">
        {[0, 1, 2].map((i) => (
          <div key={i} className="flex h-[41px] items-center bg-[#282e39] text-[9.5px] text-white">
            <div className="w-[145px] pl-[32px] leading-[13px]">
              <div className="flex items-center gap-1"><Briefcase className="h-[9px] w-[9px] fill-current" />Full time</div>
              <div className="pl-[16px] text-[8px] text-[#9a9ea4]">Jornada</div>
            </div>
            <div className="flex h-full items-center border-l border-[#4a515c] pl-[18px]"><ChevronDown className="h-[12px] w-[12px]" /></div>
          </div>
        ))}
      </div>

      <Connectors />
      {GUIDES.map((g) => (
        <div key={g} className={"absolute bg-[#ff0000]/27 " + g} />
      ))}

      <div className="[font-family:Inter,sans-serif]">
        <Label at="left-[2133px] top-[311px] flex tracking-[-0.55px]">
          Vinculación de empresa
          <span className="ml-[98px]">cripcion solicitu...</span>
        </Label>
        <div className="absolute left-[709px] top-[59px] w-[100px] text-[41px] leading-[50px] text-[#858585]">Fra...</div>
        <div className="absolute left-[709px] top-[84px] w-[70px] text-[41px] leading-[40px] text-[#858585]">Fra</div>
        <div className="absolute left-[756px] top-[104px] flex h-[126px] w-[60px] flex-col justify-between text-[13px] leading-none text-[#777]">
          <span>a</span><span>a</span><span>a</span><span>a</span><span>a</span><span className="pl-1">a ....</span><span>4</span>
        </div>
      </div>
      <span className="absolute left-[814px] top-[197px] h-[7px] w-[15px] bg-[#36b095]" />
      <div className="absolute left-[2682px] top-[284px] flex h-[66px] w-[83px] flex-col justify-between bg-white/80 px-[6px] py-[5px] text-[8px] leading-[11px] text-[#555] shadow">
        {["Laboral", "Calidad", "Habilidad", "Activos"].map((t) => (
          <div key={t} className="flex items-center justify-between">
            {t}
            <i className="h-[9px] w-[9px] bg-[#161616]" />
          </div>
        ))}
      </div>

      <h1 className="absolute left-[205px] top-[105px] whitespace-nowrap text-[58px] leading-[70px] font-bold tracking-[0.28px] text-[#4f4f4f] [font-family:Inter,sans-serif]">
        PROTOTIPO DE ALTA FIDELIDAD
      </h1>
    </main>
  );
}
